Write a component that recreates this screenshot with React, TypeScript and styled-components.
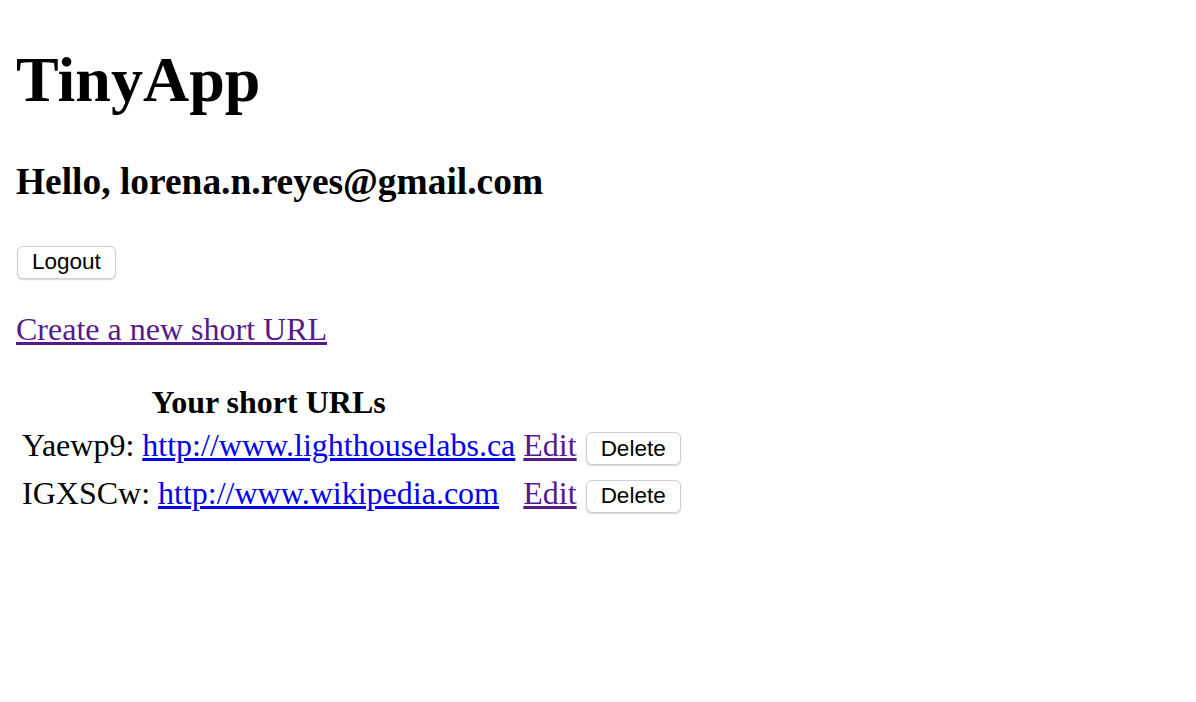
import React from 'react';
import { styled, createGlobalStyle } from 'styled-components';

// Page is a plain HTML page shown at 200% zoom, so every default size is doubled.
const GlobalStyle = createGlobalStyle`
  html, body {
    background: #fff;
  }
  body {
    margin: 0;
    padding: 0 16px 16px;
    font-family: "Liberation Serif", "Times New Roman", serif;
    font-size: 32px;
    color: #000;
  }
`;

const Title = styled.h1`
  font-size: 64px;
  font-weight: bold;
  margin: 42.88px 0;
`;

const Greeting = styled.h3`
  font-size: 37.44px;
  font-weight: bold;
  margin: 37.44px 0;
`;

const LogoutForm = styled.form`
  margin: 0;
`;

const Button = styled.button`
  font-family: "Liberation Sans", Helvetica, Arial, sans-serif;
  font-size: 22.5px;
  color: #000;
  background: #fff;
  border: 1px solid #cfcfcf;
  border-radius: 6px;
  box-shadow: 0 1px 1.5px rgba(0, 0, 0, 0.18);
  padding: 0 14px;
  height: 33px;
  margin: 0 2px 0 1px;
  cursor: pointer;
`;

const Paragraph = styled.p`
  margin: 32px 0;
`;

const Link = styled.a<{ $visited?: boolean }>`
  color: ${p => (p.$visited ? '#551a8b' : '#0000ee')};
  text-decoration: underline;
  text-underline-offset: 2px;
`;

const UrlTable = styled.table`
  border-spacing: 4px;
  border-collapse: separate;
`;

const HeadCell = styled.th`
  padding: 0 2px;
  font-weight: bold;
  text-align: center;
`;

const Cell = styled.td`
  padding: 2px 2px 3px;
  text-align: left;
  vertical-align: middle;
`;

interface ShortUrl {
  id: string;
  longUrl: string;
}

const urls: ShortUrl[] = [
  { id: 'Yaewp9', longUrl: 'http://www.lighthouselabs.ca' },
  { id: 'IGXSCw', longUrl: 'http://www.wikipedia.com' },
];

export default function App() {
  return (
    <>
      <GlobalStyle />
      <Title>TinyApp</Title>
      <Greeting>Hello, lorena.n.reyes@gmail.com</Greeting>
      <LogoutForm onSubmit={e => e.preventDefault()}>
        <Button type="submit">Logout</Button>
      </LogoutForm>
      <Paragraph>
        <Link href="#" $visited>Create a new short URL</Link>
      </Paragraph>
      <UrlTable>
        <thead>
          <tr>
            <HeadCell>Your short URLs</HeadCell>
          </tr>
        </thead>
        <tbody>
          {urls.map(url => (
            <tr key={url.id}>
              <Cell>
                {url.id}: <Link href="#">{url.longUrl}</Link>
              </Cell>
              <Cell>
                <Link href="#" $visited>Edit</Link>
              </Cell>
              <Cell>
                <form onSubmit={e => e.preventDefault()}>
                  <Button type="submit">Delete</Button>
                </form>
              </Cell>
            </tr>
          ))}
        </tbody>
      </UrlTable>
    </>
  );
}
